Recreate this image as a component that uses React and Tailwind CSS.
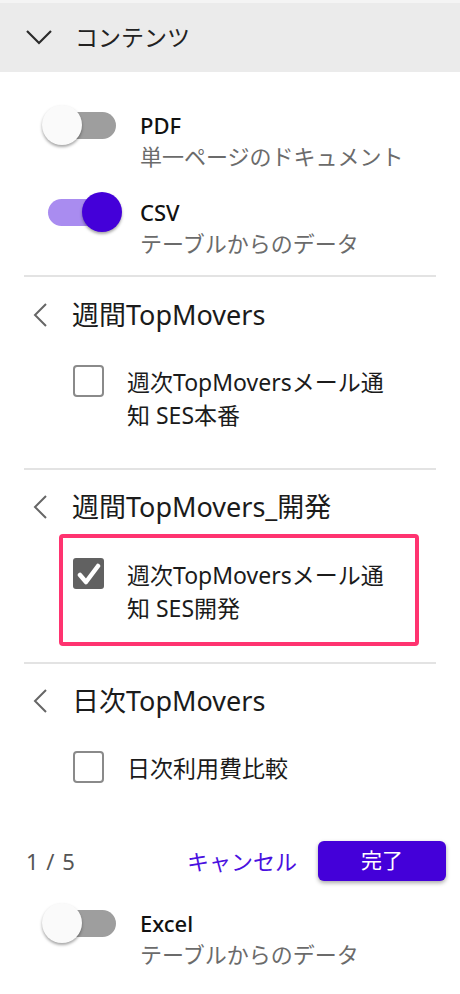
import React from "react";

const font = "font-['Noto_Sans','Noto_Sans_CJK_JP',sans-serif]";

function Toggle({ on }) {
    return (
        <div className="relative w-[80px] h-[40px] flex items-center">
            <div className={`ml-[6px] w-[68px] h-[27px] rounded-full ${on ? "bg-[#a98cf0]" : "bg-[#9e9e9e]"}`} />
            <div
                className={`absolute top-0 w-[40px] h-[40px] rounded-full shadow-[0_2px_3px_rgba(0,0,0,0.35)] ${on ? "left-[40px] bg-[#4400d9]" : "left-0 bg-[#fafafa]"}`}
            />
        </div>
    );
}

function ToggleRow({ on, label, sub, className = "" }) {
    return (
        <div className={`flex pl-[42px] ${className}`}>
            <div className="-mt-[5px]">
                <Toggle on={on} />
            </div>
            <div className="ml-[18px]">
                <div className="text-[22px] leading-[30px] font-medium text-[#111]">{label}</div>
                <div className="text-[22px] leading-[32px] text-[#6b6b6b]">{sub}</div>
            </div>
        </div>
    );
}

function ChevronLeft() {
    return (
        <svg width="16" height="24" viewBox="0 0 16 24" fill="none" className="shrink-0">
            <path d="M14 1 L3 12 L14 23" stroke="#666" strokeWidth="2" />
        </svg>
    );
}

function Checkbox({ checked }) {
    if (checked) {
        return (
            <div className="w-[31px] h-[31px] rounded-[3px] bg-[#616161] flex items-center justify-center shrink-0">
                <svg width="24" height="22" viewBox="0 0 24 22">
                    <path d="M3 12 L9 19 L21 3" stroke="#fff" strokeWidth="4.5" fill="none" strokeLinecap="round" strokeLinejoin="round" />
                </svg>
            </div>
        );
    }
    return <div className="w-[31px] h-[32px] rounded-[4px] border-2 border-[#8a8a8a] bg-white shrink-0" />;
}

function SectionHeader({ title }) {
    return (
        <div className="flex items-center h-[36px] pl-[32px]">
            <ChevronLeft />
            <span className="ml-[24px] text-[27px] leading-[36px] text-[#1b1b1b]">{title}</span>
        </div>
    );
}

function CheckItem({ checked, lines }) {
    return (
        <div className="flex items-start">
            <div className="mt-[-1px]">
                <Checkbox checked={checked} />
            </div>
            <div className="ml-[23px] text-[23px] leading-[33px] text-[#1b1b1b]">
                {lines.map((l) => (
                    <div key={l} className="whitespace-nowrap">{l}</div>
                ))}
            </div>
        </div>
    );
}

function Divider() {
    return <div className="mx-[24px] h-[2px] bg-[#e3e3e3]" />;
}

export default function App() {
    return (
        <div className={`${font} w-[460px] h-[994px] bg-white overflow-hidden`}>
            {/* 헤더 */}
            <div className="h-[72px] bg-[#ebebeb] border-t-[3px] border-[#f4f4f4] flex items-center pl-[26px]">
                <svg width="26" height="15" viewBox="0 0 26 15" fill="none">
                    <path d="M1 1 L13 13 L25 1" stroke="#2b2b2b" strokeWidth="2.2" />
                </svg>
                <span className="ml-[23px] text-[23px] text-[#222]">コンテンツ</span>
            </div>

            <div className="pt-[38px]">
                <ToggleRow on={false} label="PDF" sub="単一ページのドキュメント" />
                <ToggleRow on={true} label="CSV" sub="テーブルからのデータ" className="mt-[25px]" />
            </div>

            <div className="mt-[16px]">
                <Divider />
            </div>

            <div className="mt-[20px]">
                <SectionHeader title="週間TopMovers" />
                <div className="mt-[33px] pl-[73px]">
                    <CheckItem checked={false} lines={["週次TopMoversメール通", "知 SES本番"]} />
                </div>
            </div>

            <div className="mt-[36px]">
                <Divider />
            </div>

            <div className="mt-[19px]">
                <SectionHeader title="週間TopMovers_開発" />
                <div className="mt-[9px] ml-[59px] w-[360px] border-4 border-[#ff3370] rounded-[4px] pl-[10px] pt-[21px] pb-[17px]">
                    <CheckItem checked={true} lines={["週次TopMoversメール通", "知 SES開発"]} />
                </div>
            </div>

            <div className="mt-[16px]">
                <Divider />
            </div>

            <div className="mt-[19px]">
                <SectionHeader title="日次TopMovers" />
                <div className="mt-[33px] pl-[73px]">
                    <CheckItem checked={false} lines={["日次利用費比較"]} />
                </div>
            </div>

            <div className="mt-[56px] flex items-center pl-[26px] pr-[14px]">
                <span className="text-[22px] tracking-[1px] text-[#555]">1 / 5</span>
                <span className="ml-auto text-[22px] text-[#4a10e0]">キャンセル</span>
                <button className="ml-[21px] w-[128px] h-[40px] rounded-[6px] bg-[#4400d9] text-white text-[21px] shadow-[0_2px_4px_rgba(0,0,0,0.35)]">
                    完了
                </button>
            </div>

            <div className="mt-[27px]">
                <ToggleRow on={false} label="Excel" sub="テーブルからのデータ" />
            </div>
        </div>
    );
}
